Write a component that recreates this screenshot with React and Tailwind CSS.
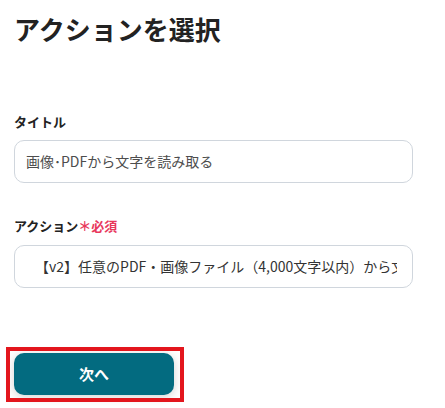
export default function App() {
  return (
    <div
      className="w-[445px] h-[408px] bg-white px-[14px] pt-[11px] overflow-hidden"
      style={{ fontFamily: '"Noto Sans CJK JP", "Noto Sans", sans-serif' }}
    >
      <h1 className="text-[26px] font-bold leading-[36px] text-[#222222]">アクションを選択</h1>

      <div className="mt-[65px] text-[13px] font-bold leading-[20px] text-[#222222]">タイトル</div>
      <div className="mt-[8px] w-[399px] h-[43px] rounded-[10px] border border-[#d0d6dd] flex items-center px-[11px]">
        <span className="text-[14px] text-[#4d4d4d] whitespace-nowrap">画像･PDFから文字を読み取る</span>
      </div>

      <div className="mt-[33px] flex items-center text-[13px] font-bold leading-[20px]">
        <span className="text-[#222222]">アクション</span>
        <span className="text-[#e8385c] font-bold">＊必須</span>
      </div>
      <div className="mt-[9px] w-[399px] h-[43px] rounded-[10px] border border-[#d0d6dd] flex items-center pl-[20px] pr-[15px]">
        <div className="overflow-hidden whitespace-nowrap text-[14px] text-[#333333]">
          【v2】任意のPDF・画像ファイル（4,000文字以内）から文字を読み取る
        </div>
      </div>

      <div className="relative mt-[65px] w-[160px]">
        <button className="w-[160px] h-[42px] rounded-[10px] bg-[#036b80] text-white text-[15px] font-bold shadow-[0_2px_10px_rgba(0,0,0,0.18)]">
          次へ
        </button>
        <div className="absolute left-[-8px] top-[-6px] w-[178px] h-[55px] border-4 border-[#e3161d] pointer-events-none"></div>
      </div>
    </div>
  );
}
